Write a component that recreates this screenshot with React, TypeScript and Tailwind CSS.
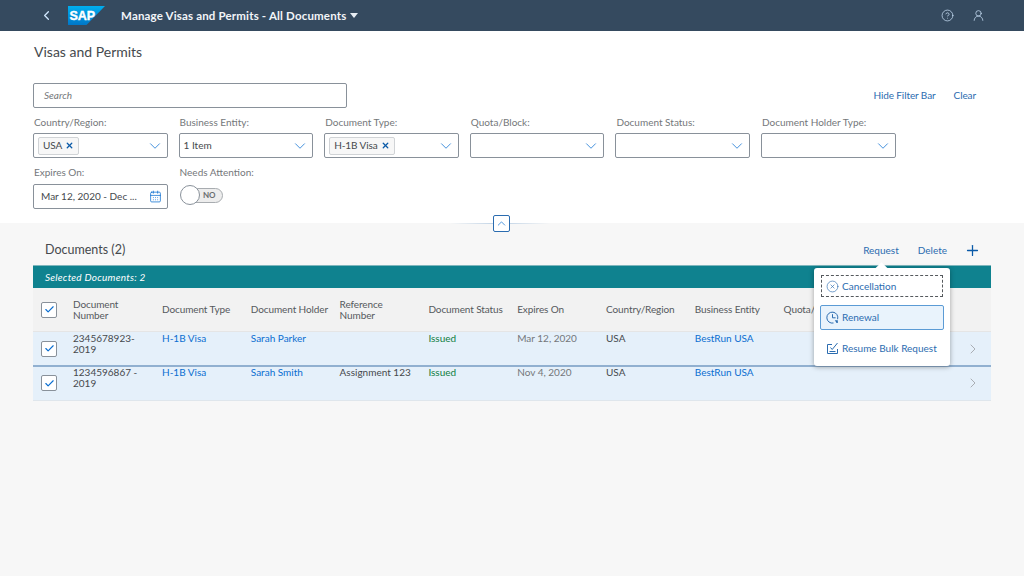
import { ChevronDown, ChevronLeft, ChevronRight, ChevronUp, Check, X, Plus, CalendarDays, CircleHelp, UserRound, CircleX } from "lucide-react";

const filters = [
  { label: "Country/Region:", token: "USA" },
  { label: "Business Entity:", text: "1 Item" },
  { label: "Document Type:", token: "H-1B Visa" },
  { label: "Quota/Block:" },
  { label: "Document Status:" },
  { label: "Document Holder Type:" },
];

const columns = [
  { name: "Document Number", wrap: true },
  { name: "Document Type" },
  { name: "Document Holder" },
  { name: "Reference Number", wrap: true },
  { name: "Document Status" },
  { name: "Expires On" },
  { name: "Country/Region" },
  { name: "Business Entity" },
  { name: "Quota/Block" },
];

const rows = [
  { number: "2345678923-2019", holder: "Sarah Parker", ref: "", expires: "Mar 12, 2020" },
  { number: "1234596867 - 2019", holder: "Sarah Smith", ref: "Assignment 123", expires: "Nov 4, 2020" },
];

function Box() {
  return (
    <div className="flex h-4 w-4 items-center justify-center rounded-[2px] border border-[#89919a] bg-white">
      <Check size={11} strokeWidth={2.5} className="text-[#0a6ed1]" />
    </div>
  );
}

function Token({ text }: { text: string }) {
  return (
    <div className="flex h-[18px] items-center gap-[2px] rounded-[2px] border border-[#d0d3d6] bg-[#f7f7f7] pl-1 pr-[4px] tracking-[-0.1px] text-[#45494d]">
      {text}
      <X size={9} strokeWidth={3.5} className="ml-[1px] text-[#0a5aa8]" />
    </div>
  );
}

function RenewalIcon() {
  return (
    <svg width="13" height="13" viewBox="0 0 13 13" fill="none" stroke="currentColor" strokeWidth="1">
      <path d="M11.6 8.2A5.5 5.5 0 1 0 7.5 12" />
      <path d="M6.5 3.2V6.8H9.6" />
      <path d="M8.8 9.2h3v2.8h-1.2z" fill="currentColor" stroke="none" />
    </svg>
  );
}

function ResumeIcon() {
  return (
    <svg width="13" height="13" viewBox="0 0 13 13" fill="none" stroke="currentColor" strokeWidth="1">
      <path d="M6 2.5H1.5V11.5H11.5V7" />
      <path d="M3.5 9.5H9.5" />
      <path d="M4.5 5.5L6.2 7.5L11.5 1" />
    </svg>
  );
}

export default function App() {
  return (
    <div className="flex min-h-[576px] flex-col bg-[#f7f7f7] font-['Lato','Open_Sans',sans-serif] text-[10px] text-[#45494d]">
      {/* shell bar */}
      <header className="flex h-[31px] items-center bg-[#354a5f] text-white">
        <ChevronLeft size={15} strokeWidth={2} className="ml-[39px] text-[#d1e8ff]" />
        <svg width="38" height="19" viewBox="0 0 38 19" className="ml-[14px]">
          <defs>
            <linearGradient id="sap" x1="0" y1="0" x2="0" y2="1">
              <stop offset="0" stopColor="#00aeef" />
              <stop offset="1" stopColor="#0077c8" />
            </linearGradient>
          </defs>
          <polygon points="0,0 37,0 18.5,19 0,19" fill="url(#sap)" />
          <text x="1.5" y="14" fontSize="12.5" fontWeight="700" fill="#fff" stroke="#fff" strokeWidth="0.4" fontFamily="Liberation Sans">SAP</text>
        </svg>
        <span className="ml-[15px] text-[11.5px] font-bold tracking-[0.17px] text-[#f2f5f8]">Manage Visas and Permits - All Documents</span>
        <div className="ml-[4px] h-0 w-0 border-x-[4px] border-t-[5px] border-x-transparent border-t-[#e8eef4]" />
        <CircleHelp size={13} strokeWidth={1.3} className="ml-auto text-[#d1e8ff]" />
        <UserRound size={13} strokeWidth={1.3} className="ml-[18px] mr-[39px] text-[#d1e8ff]" />
      </header>

      {/* filter bar */}
      <section className="relative h-[192px] bg-white px-[33px] pt-[12px]">
        <h1 className="pl-px text-[14px] leading-[17px] text-[#45494d]">Visas and Permits</h1>
        <div className="mt-[23px] flex items-center">
          <div className="flex h-[25px] w-[314px] items-center rounded-[2px] border border-[#89919a] px-[10px] italic text-[#74777a]">
            Search
          </div>
          <div className="ml-auto mr-[15px] flex gap-[18px] tracking-[-0.1px] text-[#2b6cb0]">
            <span>Hide Filter Bar</span>
            <span>Clear</span>
          </div>
        </div>
        <div className="mt-2 grid grid-cols-[repeat(6,134.6px)] gap-x-[11px]">
          {filters.map((f) => (
            <div key={f.label}>
              <div className="h-[17px] pl-px leading-[12px] text-[#74777a]">{f.label}</div>
              <div className="flex h-[25px] items-center rounded-[2px] border border-[#89919a] bg-white pl-1 pr-[3px]">
                {f.token && <Token text={f.token} />}
                {f.text && <span>{f.text}</span>}
                <ChevronDown size={18} strokeWidth={1} className="ml-auto text-[#0a6ed1]" />
              </div>
            </div>
          ))}
        </div>
        <div className="mt-[8px] grid grid-cols-[repeat(6,134.6px)] gap-x-[11px]">
          <div>
            <div className="h-[18px] pl-px leading-[12px] text-[#74777a]">Expires On:</div>
            <div className="flex h-[25px] items-center rounded-[2px] border border-[#89919a] pl-[7px] pr-[5px]">
              Mar 12, 2020 - Dec ...
              <CalendarDays size={13} strokeWidth={1.4} className="ml-auto text-[#0a6ed1]" />
            </div>
          </div>
          <div>
            <div className="h-[18px] pl-px leading-[12px] text-[#74777a]">Needs Attention:</div>
            <div className="relative mt-[2px] flex h-[18px] w-[44px] items-center">
              <div className="ml-[3px] flex h-[15px] w-[41px] items-center justify-end rounded-full border border-[#a8acb0] bg-[#ededed] pr-[6px] text-[8px] font-bold text-[#6a6d70]">
                NO
              </div>
              <div className="absolute left-px h-[20px] w-[20px] rounded-full border border-[#89919a] bg-white" />
            </div>
          </div>
        </div>
        {/* collapse handle */}
        <div className="absolute bottom-0 left-[450px] h-px w-[100px] translate-y-px bg-[linear-gradient(to_right,transparent,#bcd0e4,transparent)]" />
        <div className="absolute bottom-[-9px] left-[493px] flex h-[17px] w-[17px] items-center justify-center rounded-[2px] border border-[#2b6cb0] bg-white">
          <ChevronUp size={13} strokeWidth={1.3} className="text-[#0a6ed1]" />
        </div>
      </section>

      {/* documents */}
      <section className="relative px-[33px]">
        <div className="flex h-[42px] items-center pl-3 pr-[10px]">
          <span className="pt-[12px] text-[12.5px] text-[#45494d]">Documents (2)</span>
          <div className="ml-auto flex items-center gap-[19px] pt-[12px] text-[#2b6cb0]">
            <span>Request</span>
            <span>Delete</span>
            <Plus size={17} strokeWidth={1.8} className="-ml-[2px] text-[#0a5aa8]" />
          </div>
        </div>
        <div className="flex h-[23px] items-center border-t border-[#7fb6bd] bg-[#0f828f] pl-3 italic tracking-[0.25px] text-white">
          Selected Documents: 2
        </div>
        <div className="grid h-[44px] grid-cols-[40px_89px_repeat(8,88.8px)_1fr] items-center border-b border-[#e5e5e5] bg-[#f2f2f2] tracking-[-0.1px] text-[#55595d]">
          <div className="pl-[8px]"><Box /></div>
          {columns.map((c) => (
            <div key={c.name} className={`leading-[11px] ${c.wrap ? "w-[60px]" : "whitespace-nowrap"}`}>{c.name}</div>
          ))}
        </div>
        {rows.map((r, i) => (
          <div
            key={r.number}
            className={`grid h-[34.5px] grid-cols-[40px_89px_repeat(8,88.8px)_1fr] bg-[#e5f0fa] leading-[11px] ${i === 0 ? "border-b-2 border-[#91b0d0] pt-px" : "border-b border-[#dfe6ec]"}`}
          >
            <div className="flex items-center pl-[8px]"><Box /></div>
            <div className="w-[72px]">{r.number}</div>
            <div className="text-[#0a6ed1]">H-1B Visa</div>
            <div className="text-[#0a6ed1]">{r.holder}</div>
            <div>{r.ref}</div>
            <div className="text-[#107e3e]">Issued</div>
            <div className="text-[#74777a]">{r.expires}</div>
            <div>USA</div>
            <div className="text-[#0a6ed1]">BestRun USA</div>
            <div />
            <div className="flex items-center justify-end pr-[10px]">
              <ChevronRight size={16} strokeWidth={1.3} className="text-[#a0a4a8]" />
            </div>
          </div>
        ))}

        {/* request menu */}
        <div className="absolute left-[814px] top-[45px] w-[136px] rounded-[3px] bg-white px-[6px] pb-[5px] pt-[7px] text-[#2b6cb0] shadow-[0_1px_5px_rgba(0,0,0,0.35)]">
          <div className="absolute left-[63px] top-[-4px] h-[9px] w-[9px] rotate-45 bg-white" />
          <div className="relative mx-px flex h-[22px] items-center gap-[3px] border border-dashed border-[#55595d] px-[4px]">
            <CircleX size={13} strokeWidth={1.2} />
            Cancellation
          </div>
          <div className="mt-[8px] flex h-[25px] items-center gap-[3px] rounded-[2px] border border-[#5b9bd5] bg-[#e9f3fc] px-[5px]">
            <RenewalIcon />
            Renewal
          </div>
          <div className="mt-[5px] flex h-[26px] items-center gap-[3px] px-[6px]">
            <ResumeIcon />
            <span className="whitespace-nowrap">Resume Bulk Request</span>
          </div>
        </div>
      </section>
    </div>
  );
}
